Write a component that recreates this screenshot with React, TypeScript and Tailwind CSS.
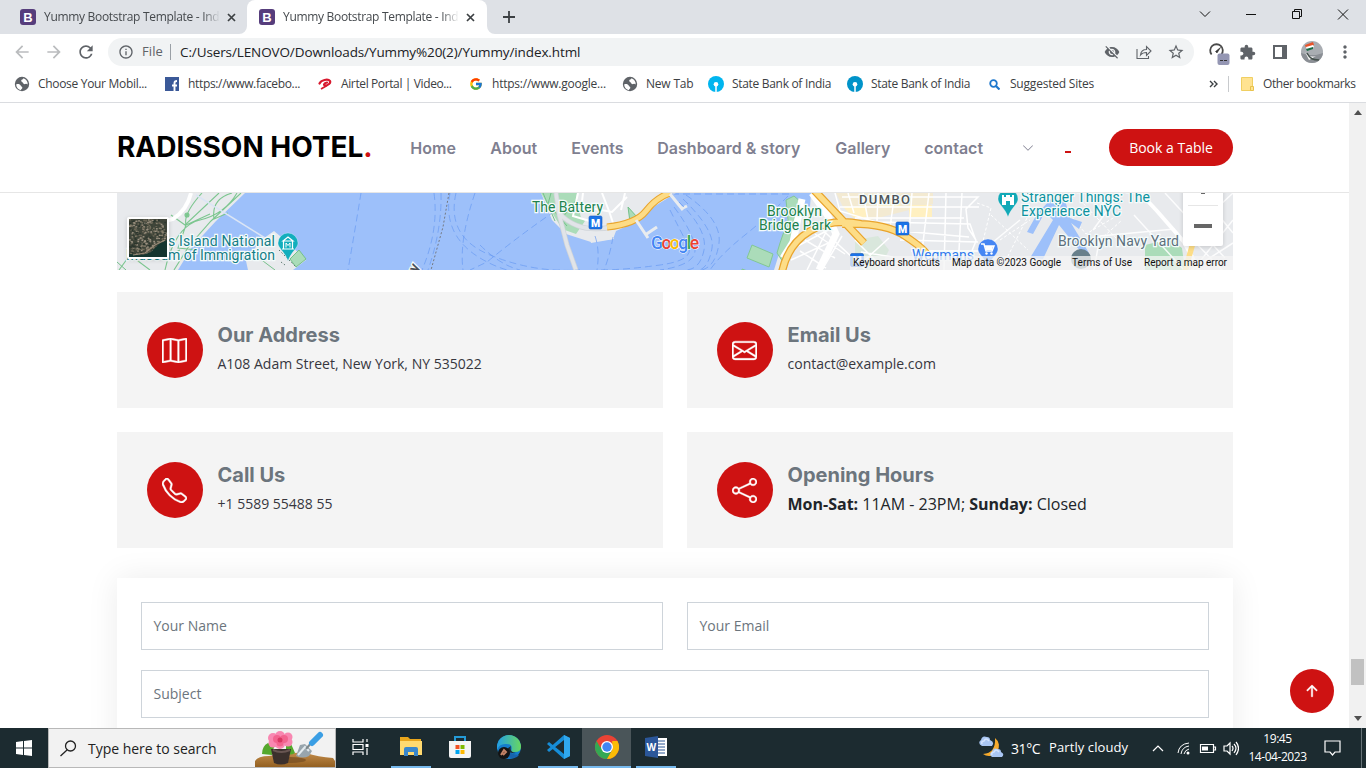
import React from "react";
import {
  BsMap,
  BsEnvelope,
  BsTelephone,
  BsShare,
  BsChevronDown,
  BsArrowUpShort,
} from "react-icons/bs";
import {
  MdRefresh,
  MdVisibilityOff,
  MdStarBorder,
  MdExtension,
  MdMoreVert,
  MdInfoOutline,
  MdArrowBack,
  MdArrowForward,
} from "react-icons/md";
import { FcGoogle } from "react-icons/fc";

const ui = "font-['Open_Sans','Noto_Sans',sans-serif]";

function TabLabel() {
  return (
    <span className="w-[176px] overflow-hidden whitespace-nowrap text-[12px] leading-4 tracking-[-0.31px] text-[#45494d] [mask-image:linear-gradient(to_right,black_90%,transparent)]">
      Yummy Bootstrap Template - Index
    </span>
  );
}

function BootstrapMark() {
  return (
    <span className="mr-2 flex size-4 items-center justify-center rounded-[3px] bg-[#563d7c] font-['Liberation_Sans',sans-serif] text-[13px] font-bold leading-none text-white">
      B
    </span>
  );
}

function Cross() {
  return (
    <svg width="9" height="9" viewBox="0 0 9 9" stroke="#3c4043" strokeWidth="1.7">
      <path d="M1 1l7 7M8 1l-7 7" />
    </svg>
  );
}

function TabStrip() {
  return (
    <div className="flex h-[34px] shrink-0 bg-[#dee1e6]">
      <div className="flex h-full w-[247px] items-center pl-5">
        <BootstrapMark />
        <TabLabel />
        <span className="ml-[7px]"><Cross /></span>
      </div>
      <div className="relative flex h-full w-[240px] items-center rounded-t-lg bg-white pl-3">
        <svg className="absolute -left-2 bottom-0" width="8" height="8"><path d="M8 0v8H0a8 8 0 0 0 8-8" fill="#fff" /></svg>
        <svg className="absolute -right-2 bottom-0" width="8" height="8"><path d="M0 0v8h8a8 8 0 0 1-8-8" fill="#fff" /></svg>
        <BootstrapMark />
        <TabLabel />
        <span className="ml-[7px]"><Cross /></span>
      </div>
      <div className="flex w-[44px] items-center justify-center">
        <svg width="12" height="12" stroke="#3c4043" strokeWidth="1.8"><path d="M6 0v12M0 6h12" /></svg>
      </div>
      <div className="flex-1" />
      <svg className="mt-[6px]" width="184" height="16" fill="none" stroke="#111" strokeWidth="1">
        <path d="M18 5.500l5 5 5-5M64 8.500h10M110.500 5.500h7v7h-7zM112.500 5.500v-2h7v7h-2M156 3.500l10 10M166 3.500l-10 10" />
      </svg>
    </div>
  );
}

function Toolbar() {
  return (
    <div className="flex h-9 shrink-0 items-center bg-white pl-3">
      <MdArrowBack className="size-5 text-[#babcbe]" />
      <MdArrowForward className="ml-3 size-5 text-[#babcbe]" />
      <MdRefresh className="ml-3 size-5 text-[#5f6368]" />
      <div className="ml-3 flex h-7 w-[1086px] items-center rounded-full bg-[#f1f3f4] pl-2.5">
        <MdInfoOutline className="size-4 text-[#5f6368]" />
        <span className="ml-2 w-[28px] text-[13px] tracking-[0.1px] text-[#5f6368]">File</span>
        <span className="h-4 w-px bg-[#9aa0a6]" />
        <span className="ml-[9px] flex-1 whitespace-nowrap text-[13.500px] tracking-[-0.11px] text-[#202124]">
          C:/Users/LENOVO/Downloads/Yummy%20(2)/Yummy/index.html
        </span>
        <MdVisibilityOff className="size-4 text-[#5f6368]" />
        <svg className="ml-4" width="16" height="16" fill="none" stroke="#5f6368" strokeWidth="1.100">
          <path d="M1 5v9.500h11.500V12M4.500 11c.5-4 3-5.500 6-5.500V2.500L15 7l-4.500 4.500v-3C8 8.500 6 9 4.500 11z" />
        </svg>
        <MdStarBorder className="ml-[15px] mr-[9px] size-[18px] text-[#5f6368]" />
      </div>
      <svg className="ml-[14px]" width="22" height="26" viewBox="0 0 22 26">
        <path d="M3.600 15.500A6.300 6.300 0 1 1 13.400 15.500" fill="none" stroke="#4a4a4a" strokeWidth="1.800" />
        <path d="M7.500 12.500l5-4-3.500 5.500z" fill="#333" stroke="#333" strokeWidth=".6" />
        <rect x="9.500" y="14.500" width="12" height="11.500" rx="2" fill="#9496b3" />
        <path d="M12 21.500h3M16 21.500h3" stroke="#333" />
      </svg>
      <MdExtension className="ml-[9px] size-[17px] text-[#5f6368]" />
      <svg className="ml-[17px]" width="14" height="14"><path d="M1 1h12v12H1z" fill="none" stroke="#5f6368" strokeWidth="2" /><path d="M9 1h5v12H9z" fill="#5f6368" /></svg>
      <svg className="ml-[14px]" width="22" height="22" viewBox="0 0 22 22">
        <defs><clipPath id="avatar"><circle cx="11" cy="11" r="11" /></clipPath></defs>
        <g clipPath="url(#avatar)">
          <path d="M0 0h22v22H0z" fill="#a9adb2" />
          <path d="M0 12l7 2 8 0 7-2v10H0z" fill="#8b8f95" />
          <path d="M4 4l8-3 1 3-8 3z" fill="#e9532a" /><path d="M5 6l7-2 1 2-7 3z" fill="#fff" /><path d="M5 8l7-2v2l-6 2z" fill="#176b45" />
          <path d="M4 11c3 5 7 5 11 4l-7 4z" fill="#f3f3f3" /><path d="M6 12c3 6 6 7 12 7" stroke="#45514c" strokeWidth="1.500" fill="none" />
        </g>
      </svg>
      <MdMoreVert className="ml-3 size-5 text-[#5f6368]" />
    </div>
  );
}

function Bookmark({ icon, label, box, text }: { icon: React.ReactNode; label: string; box: string; text: string }) {
  return (
    <div className={`flex items-center ${box}`}>
      <span className="flex size-4 items-center justify-center">{icon}</span>
      <span className={`whitespace-nowrap text-[12px] text-[#3c4043] ${text}`}>{label}</span>
    </div>
  );
}

const Globe = () => (
  <svg width="16" height="16" viewBox="0 0 16 16">
    <circle cx="8" cy="8" r="7.200" fill="#5f6368" />
    <path d="M2.300 8.300c2-.5 4 0 4.500 1.400.4 1 1.700.6 1.500 2.300 0 1-1.300 1-1.500 2.200C4 13.500 2 11 2.300 8.300z" fill="#fff" />
    <path d="M9.500 2.200c-.3 1.300-2 1-2.300 2.200-.3 1.400 1.300 1.200 1.700 2.400.3 1 1.500 1.700 2.600 1.200.8-.4 1.500.2 2.200.6.300-3-1.500-5.500-4.200-6.400z" fill="#fff" />
  </svg>
);

function SbiMark({ color }: { color: string }) {
  return (
    <svg width="16" height="16" viewBox="0 0 16 16">
      <circle cx="8" cy="8" r="8" fill={color} />
      <circle cx="8" cy="8.300" r="2.300" fill="#fff" />
      <path d="M8 8v8" stroke="#fff" strokeWidth="1.500" />
    </svg>
  );
}

function Bookmarks() {
  return (
    <div className="flex h-[33px] shrink-0 items-center border-b border-[#dadce0] bg-white pb-1 pl-[14px]">
      <Bookmark icon={<Globe />} label="Choose Your Mobil..." box="w-[150px]" text="ml-2 tracking-[-0.31px]" />
      <Bookmark icon={<svg width="14" height="14"><path d="M0 0h14v14H0z" fill="#3b5998" /><path d="M9.500 14V8.500h2.500M7 8.500h2.500V6q0-2 2.500-2" fill="none" stroke="#fff" strokeWidth="1.900" /></svg>} label="https://www.facebo..." box="w-[153px]" text="ml-2 tracking-[-0.34px]" />
      <Bookmark icon={<svg width="14" height="12"><path d="M1.500 5.500C3 2 10 .5 12 3c1 2-2 4.500-4.500 4.500S6 5 9 4.500" fill="none" stroke="#d8192e" strokeWidth="2.200" strokeLinecap="round" /><path d="M3 11l6-3.500" stroke="#d8192e" strokeWidth="1.800" /></svg>} label="Airtel Portal | Video..." box="w-[151px]" text="ml-2 tracking-[-0.38px]" />
      <Bookmark icon={<FcGoogle className="size-[14px]" />} label="https://www.google..." box="w-[154px]" text="ml-2 tracking-[-0.23px]" />
      <Bookmark icon={<Globe />} label="New Tab" box="w-[86px]" text="ml-2 tracking-[-0.2px]" />
      <Bookmark icon={<SbiMark color="#00b5ef" />} label="State Bank of India" box="w-[139px]" text="ml-2 tracking-[-0.31px]" />
      <Bookmark icon={<SbiMark color="#0093c9" />} label="State Bank of India" box="w-[139px]" text="ml-2 tracking-[-0.31px]" />
      <Bookmark icon={<svg width="11" height="11" fill="none" stroke="#1e78cd" strokeWidth="1.800"><circle cx="4.500" cy="4.500" r="3.300" /><path d="M7 7l3.500 3.500" strokeWidth="2.200" /></svg>} label="Suggested Sites" box="w-[223px]" text="ml-2 tracking-[-0.21px]" />
      <svg width="9" height="8" fill="none" stroke="#3c4043" strokeWidth="1.400"><path d="M1 1l3 3-3 3M5 1l3 3-3 3" /></svg>
      <span className="ml-[10px] h-4 w-px bg-[#c8cacd]" />
      <svg className="ml-3" width="13" height="14"><path d="M.5.500h11v13H.5z" fill="#ffe391" stroke="#f0cf62" /><path d="M9.500 9.500h3v4h-3z" fill="#ffe391" stroke="#e8c24c" /></svg>
      <span className="ml-[9px] whitespace-nowrap text-[12px] tracking-[-0.4px] text-[#3c4043]">Other bookmarks</span>
    </div>
  );
}

function SiteHeader() {
  return (
    <header className="flex h-[90px] shrink-0 items-center border-b border-[#e6e6e6] pl-[117px] pr-[116px] font-['Inter',sans-serif]">
      <h1 className="w-[293px] whitespace-nowrap pb-0.5 text-[28px] font-bold tracking-[-0.03px] text-black">
        RADISSON HOTEL<span className="text-[#ce1212]">.</span>
      </h1>
      <nav className="flex flex-1 whitespace-nowrap pl-[0.3px] text-[16px] font-semibold text-[#7f7f90]">
        <span className="w-[80px]">Home</span>
        <span className="w-[81px]">About</span>
        <span className="w-[86px]">Events</span>
        <span className="w-[178px]">Dashboard &amp; story</span>
        <span className="w-[89px]">Gallery</span>
        <span className="w-[98px]">contact</span>
        <BsChevronDown className="mt-[6px] h-3 w-3" />
        <span className="ml-[30.5px] mt-[9px] h-0.5 w-[6px] self-center bg-[#ce1212]" />
      </nav>
      <span className={`flex h-[37px] w-[124px] items-center justify-center rounded-full bg-[#ce1212] text-[14px] text-white ${ui}`}>
        Book a Table
      </span>
    </header>
  );
}

const ferryPaths = [
  "M361 193Q355 230 348 270", "M434 193Q439 230 422 270", "M441 193Q442 230 428 270", "M450 193Q442 235 480 258T560 270",
  "M456 193Q446 237 490 255T580 270", "M475 193Q459 240 463 270", "M555 211Q520 235 487 262L470 270",
  "M670 210Q680 230 688 245T660 265T600 270", "M674 207Q695 235 695 250T660 270", "M679 202Q708 230 704 250T685 270",
  "M683 199Q715 230 712 248T700 270", "M686 195Q722 220 719 243T702 270",
  "M672 194H790Q770 215 745 235T710 270", "M595 236Q600 250 597 270", "M613 237Q610 255 604 270", "M480 245Q500 265 520 270",
];

function Pin({ x, y, color, children }: { x: number; y: number; color: string; children?: React.ReactNode }) {
  return (
    <g transform={`translate(${x} ${y})`}>
      <path d="M-10 0A10 10 0 1 1 10 0C10 5 3 9 0 18C-3 9-10 5-10 0z" fill={color} stroke="#fff" strokeOpacity=".5" strokeWidth=".6" />
      {children}
    </g>
  );
}

function Metro({ x, y }: { x: number; y: number }) {
  return (
    <g transform={`translate(${x} ${y})`}>
      <rect x="-6.500" y="-6.500" width="13" height="13" rx="1.500" fill="#1a73e8" stroke="#1559bd" strokeWidth=".6" />
      <text textAnchor="middle" y="4" fontSize="10.500" fontWeight="900" fill="#fff">M</text>
    </g>
  );
}

function MapStrip() {
  const speckles = Array.from({ length: 420 }, (_, i) => {
    const a = Math.abs(Math.sin(i * 12.9898) * 43758.5453) % 1;
    const b = Math.abs(Math.sin(i * 78.233) * 24634.6345) % 1;
    return {
      x: 129 + a * 36,
      y: 219 + b * 36,
      c: ["#6b6656", "#2b352d", "#877f6c", "#3c4337", "#9a9080", "#252d29"][(i * 7 + Math.floor(i / 5)) % 6],
    };
  });
  return (
    <svg className="block h-[77px] w-[1116px] font-['Roboto',sans-serif]" viewBox="117 193 1116 77">
      <path d="M117 193h1116v77H117z" fill="#9dc0fa" />
      <path d="M117 193H245L216 221 192 247 178 270H117z" fill="#e8eaed" />
      <g fill="none" stroke="#7cc68f" strokeWidth="1.100">
        <path d="M241 193L211 221 189 246 174 270M237 193Q225 214 200 220T165 270M232 193Q211 199 214 219L228 213M202 193Q183 214 186 225L210 214M186 225L178 248 198 250M219 193L185 225 171 215M180 250Q160 260 145 250M119 270L130 255 150 270" />
        <circle cx="187" cy="215" r="2" fill="#7cc68f" />
      </g>
      <path d="M191 193Q187 210 173 219L158 223" fill="none" stroke="#fff" strokeWidth="4" />
      <path d="M196 195L265 238" stroke="#dbe5f5" strokeWidth="1.500" />
      <path d="M260 241l14-10 12 10 20 19-13 10h-45l-2-9z" fill="#e8eaed" />
      <path d="M290 259l9-9 7 9-10 8z" fill="#aadcb9" stroke="#75c08a" />
      <path d="M279 250l17 17M281 262l4 3M286 253l2 4" stroke="#5e7a72" strokeDasharray="1.500 2" />
      <path d="M117 262l9 8M255 255l20 15" stroke="#75c08a" />

      <path d="M541 193H676L655 206 636 222 616 231 613 239 591 242 566 234 552 220z" fill="#e8eaed" />
      <path d="M541 193h36l-3 18 11 10-9 13-14-5-12-20z" fill="#abdcb9" />
      <path d="M543 193l12 28M551 193l-3 11 19 22M577 199l-14 18 20 11M628 207l9 10-7 5z" stroke="#75c08a" fill="#abdcb9" />
      <path d="M578 193l-5 23 30 9M573 205l39 7 15-15M602 193l7 18 6 18M583 193l-2 17M625 193l-4 17" fill="none" stroke="#fff" strokeWidth="2" />
      <path d="M589 234l24-3 1 8-23 4z" fill="#e8eaed" />
      <path d="M556 193l3 21 8 31 10 28M560 214Q579 234 612 227" fill="none" stroke="#cfd3d8" strokeWidth="5" />
      <path d="M556 193l3 21 8 31 10 28M560 214Q579 234 612 227" fill="none" stroke="#e1e4e8" strokeWidth="3.500" />
      <path d="M607 227Q636 224 646 211T670 193" fill="none" stroke="#e8a52e" strokeWidth="7" />
      <path d="M607 227Q636 224 646 211T670 193" fill="none" stroke="#fddc86" strokeWidth="5" />
      <path d="M636 220l12 18M645 235l12-8M670 194l13 16M681 209l6-3" stroke="#e9ecef" strokeWidth="3" />
      <g fill="none" stroke="#6698f1" strokeWidth=".8" strokeOpacity=".85" strokeDasharray="7 4">
        {ferryPaths.map((d) => <path key={d} d={d} />)}
      </g>
      <path d="M449 193L443 227 431 270" fill="none" stroke="#747983" strokeDasharray="2 2" />

      <path d="M811 193H1233V270H774L779 254 786 236 788 210 795 202 810 207z" fill="#e8eaed" />
      <path d="M786 200l8-4 8 7-6 8-4 27-6 15-3 9-6-9 3-10 8-23zM752 245l21 9-4 13-22-9zM742 269l8 3h-8z" fill="#abdcb9" stroke="#82c795" />
      <path d="M812 193l16 23 8 18-17 36M802 199l-9 43-10 16" fill="none" stroke="#fff" strokeWidth="7" />
      <path d="M836 193h97v11l-63 16-27-13z" fill="#f3ead2" />
      <path d="M843 207h23v11h-12zM878 197h22v10h-22zM909 205h23v12h-23z" fill="#fff0c1" />
      <path d="M855 240l23-4 11 14-10 20h-24z" fill="#d9e7dc" />
      <path d="M1145 245l25-6 12 9 3 22h-40z" fill="#abdcb9" />
      <g fill="none" stroke="#fff" strokeWidth="1.500">
        <path d="M835 193l5 18 36 11 94 2 6 17-12 29M848 193l6 20M863 193l5 27M878 193l-1 28M895 193l-5 34M912 193l-3 41M929 193l-7 58M946 193l-2 77M962 193l-4 77M840 207h139M855 218h109M890 230l79 7M900 240l78 2M911 251h67M842 197h136l-12 12 2 19 8 12M790 250l42-22M791 260l44-20M805 240l30 18M800 251l26 17M815 234l30 20M827 230l-20 40M842 236l-20 34M816 224l50 46M855 240l30 30M889 238l-35 32M861 252l32 5" />
        <path d="M1120 193l-27 37M1134 215l50 55M1165 193l60 65M1210 205l23 28M1222 270l-34-35 45-42M1193 270l40-50M1205 193l-20 77M1233 243l-42 27M1094 270l6-34 75-7M983 270l9-27 28-23" strokeOpacity=".85" />
      </g>
      <g fill="none" stroke="#fff" strokeDasharray="3 2"><path d="M977 203l14 5-12 50M991 215l37 35M1001 270l27-54M1066 210l20 24 34-20M1080 200l36 38M1100 240l22-20M1000 240l30-20" /></g>
      <path d="M1140 193l17 18 27 31 15 28" fill="none" stroke="#fff" strokeWidth="4" />
      <path d="M1018 207l18 8 15-16 14 1 5 18 12 4-3 7-8-6 18 30-8-1-22-27-16 34-13-1 23-38-8-8-12 22-6-2 10-18z" fill="#9dc0fa" />
      <path d="M782 272Q788 244 810 231T861 224M813 189L864 243M842 224Q884 222 905 236T927 255" fill="none" stroke="#e9a42c" strokeWidth="8" />
      <path d="M782 272Q788 244 810 231T861 224M813 189L864 243M842 224Q884 222 905 236T927 255M1184 275l10-36" fill="none" stroke="#fddd87" strokeWidth="5.500" />

      <g fill="#147d86" stroke="#f4fbfb" strokeWidth="2.500" paintOrder="stroke" fontSize="14">
        <text x="149" y="246" textLength="126">Ellis Island National</text>
        <text x="126" y="260" textLength="149">Museum of Immigration</text>
        <text x="1021" y="202" textLength="129" fill="#0d929f">Stranger Things: The</text>
        <text x="1021" y="216" textLength="100" fill="#0d929f">Experience NYC</text>
        <g fill="#20824c">
          <text x="532" y="212" textLength="71">The Battery</text>
          <text x="767" y="216" textLength="55">Brooklyn</text>
          <text x="759" y="230" textLength="72">Bridge Park</text>
        </g>
        <text x="859" y="204" textLength="51" fontSize="13" fontWeight="500" fill="#4e5358">DUMBO</text>
        <text x="1058" y="246" textLength="121" fill="#5c6f7c">Brooklyn Navy Yard</text>
        <text x="912" y="260" textLength="62" fill="#3279ed">Wegmans</text>
        <text transform="translate(417 273) rotate(-65)" fontSize="15" fontWeight="500" fill="#49505b">y</text>
      </g>
      <Pin x={288} y={243} color="#12aebd"><path d="M-5-2L0-6 5-2zM-4.500-1.500v7M4.500-1.500v7M-6 6H6" fill="none" stroke="#fff" strokeWidth="1.200" /><path d="M-2 4.500V0L0 2.500 2 0v4.500" stroke="#fff" fill="none" /></Pin>
      <Pin x={1008} y={199} color="#12a9b7"><path d="M-6-4h2v2h2v-2h4v2h2v-2h2v10H2V2H-2v4h-4z" fill="#fff" /></Pin>
      <Pin x={988} y={249} color="#4686f3"><path d="M-7-5h3l2 7h6l2-5H-3" fill="none" stroke="#fff" strokeWidth="1.500" /><path d="M-3-3h8L4 1h-6z" fill="#fff" /><circle cx="-1.500" cy="4.500" r="1.200" fill="#fff" /><circle cx="3.500" cy="4.500" r="1.200" fill="#fff" /></Pin>
      <circle cx="1081" cy="259" r="10" fill="#68808b" />
      <Metro x={595.5} y={222.5} /><Metro x={902.5} y={228.5} /><Metro x={857} y={260} />
      <text x="651" y="249" textLength="48" fontSize="17.500" fontWeight="500" fill="#4285f4" stroke="#fff" strokeWidth="1" paintOrder="stroke">
        G<tspan fill="#ea4335">o</tspan><tspan fill="#fbbc05">o</tspan><tspan>g</tspan><tspan fill="#34a853">l</tspan><tspan fill="#ea4335">e</tspan>
      </text>
      <path d="M850 256h383v14H850z" fill="#f5f5f5" fillOpacity=".76" />
      <g fontSize="10" fill="#111">
        <text x="853" y="266" textLength="87">Keyboard shortcuts</text>
        <text x="952" y="266" textLength="109">Map data ©2023 Google</text>
        <text x="1072" y="266" textLength="60">Terms of Use</text>
        <text x="1144" y="266" textLength="83">Report a map error</text>
      </g>
      <rect x="127" y="217" width="42" height="42" rx="2" fill="#fff" className="drop-shadow-sm" />
      <path d="M129 219h38v38h-38z" fill="#40453a" />
      {speckles.map((s, i) => <rect key={i} x={s.x} y={s.y} width="1.800" height="1.500" fill={s.c} />)}
      <path d="M129 257v-3l14 1 8-3 8-8 8-4v17z" fill="#15352f" />
      <path d="M133 255l12-2 10-8 10-5" fill="none" stroke="#9a8b78" strokeWidth="1.200" />
      <rect x="1183" y="180" width="40" height="66" rx="2" fill="#fff" className="drop-shadow-sm" />
      <path d="M1188 205.500h30" stroke="#e6e6e6" />
      <path d="M1201 193h4v1h-4z" fill="#666" /><path d="M1194 224h18v4h-18z" fill="#666" />
    </svg>
  );
}

function InfoCard({ icon, title, children }: { icon: React.ReactNode; title: string; children: React.ReactNode }) {
  return (
    <div className="flex h-[116px] bg-[#f4f4f4] px-[30px] pt-[30px]">
      <span className="flex size-14 items-center justify-center rounded-full bg-[#ce1212] pr-px text-white">{icon}</span>
      <div className="ml-[14.5px]">
        <h3 className="pt-px font-['Inter',sans-serif] text-[20px] font-bold leading-6 text-[#6c757d]">{title}</h3>
        {children}
      </div>
    </div>
  );
}

const small = "mt-[6px] text-[14px] leading-[21px] text-[#37373f]";
const cardIcon = "size-[25px] stroke-current [stroke-width:0.25px]";

function Field({ label }: { label: string }) {
  return <div className="flex h-12 items-center border border-[#ced4da] bg-white px-[11.500px] pb-0.5 text-[14px] text-[#6c757d]">{label}</div>;
}

function Page() {
  return (
    <main className="min-w-0 flex-1 overflow-hidden bg-white">
      <SiteHeader />
      <div className={`ml-[117px] w-[1116px] ${ui}`}>
        <MapStrip />
        <div className="mt-[22px] grid grid-cols-2 gap-6">
          <InfoCard icon={<BsMap className={cardIcon} />} title="Our Address"><p className={small}>A108 Adam Street, New York, NY 535022</p></InfoCard>
          <InfoCard icon={<BsEnvelope className={cardIcon} />} title="Email Us"><p className={small}>contact@example.com</p></InfoCard>
          <InfoCard icon={<BsTelephone className={cardIcon} />} title="Call Us"><p className={small}>+1 5589 55488 55</p></InfoCard>
          <InfoCard icon={<BsShare className={cardIcon} />} title="Opening Hours">
            <p className="mt-[5px] whitespace-nowrap text-[16px] leading-6 text-[#212529]"><b className="font-bold">Mon-Sat:</b> 11AM - 23PM; <b className="font-bold">Sunday:</b> Closed</p>
          </InfoCard>
        </div>
        <div className="mt-[30px] h-[300px] bg-white p-6 shadow-[0_0_30px_rgba(0,0,0,0.08)]">
          <div className="grid grid-cols-2 gap-6"><Field label="Your Name" /><Field label="Your Email" /></div>
          <div className="mt-5"><Field label="Subject" /></div>
        </div>
      </div>
    </main>
  );
}

function Scrollbar() {
  return (
    <div className="flex w-[17px] flex-col items-center bg-[#f1f1f1]">
      <svg className="mt-[7px]" width="8" height="5"><path d="M0 5l4-5 4 5z" fill="#505050" /></svg>
      <div className="mt-[544px] h-[26px] w-[13px] bg-[#c1c1c1]" />
      <svg className="mt-[31px]" width="8" height="5"><path d="M0 0l4 5 4-5z" fill="#505050" /></svg>
    </div>
  );
}

function TaskItem({ children, open, active }: { children: React.ReactNode; open?: boolean; active?: boolean }) {
  return (
    <div className={`flex h-10 w-[49px] flex-col items-center ${active ? "bg-[#4a5559]" : ""}`}>
      <div className="flex flex-1 items-center justify-center">{children}</div>
      <span className={`h-0.5 ${active ? "w-full" : "w-10"} ${open ? "bg-[#76b9ed]" : ""}`} />
    </div>
  );
}

function Taskbar() {
  return (
    <footer className={`flex h-10 shrink-0 bg-[#1c2b30] text-white ${ui}`}>
      <div className="flex w-12 items-center justify-center">
        <svg width="16" height="16" fill="#fff"><path d="M0 2l7-1v6.500H0zM8 .900L16 0v7.500H8zM0 8.500h7V15l-7-1zM8 8.500h8V16l-8-1z" /></svg>
      </div>
      <div className="flex w-[288px] items-center border border-[#b8b8b8] bg-[#f2f2f2] pl-[11px] text-[#222]">
        <svg width="17" height="17" fill="none" stroke="#222" strokeWidth="1.300"><circle cx="10.500" cy="6" r="5" /><path d="M7 10L.5 16" /></svg>
        <span className="ml-[11px] w-[167px] whitespace-nowrap text-[14px] tracking-[-0.02px]">Type here to search</span>
        <svg width="80" height="38" viewBox="0 0 80 38">
          <defs><linearGradient id="soil" x2="0" y2="1"><stop stopColor="#c28b49" /><stop offset="1" stopColor="#936021" /></linearGradient></defs>
          <path d="M0 38v-6q3-5 14-5 20-4 37-3 12 4 27 5l2 3v6z" fill="url(#soil)" />
          <ellipse cx="35" cy="31" rx="16" ry="3" fill="#6d461e" opacity=".6" />
          <path d="M7 25q0-8 6-11l6 4-2 8zM31 17q3-3 5-2 2 4 4 9-5 3-9 0z" fill="#55a82d" />
          <path d="M16 20h20l-3 14q-7 3-14 0z" fill="#3b302c" /><path d="M18 21q8 4 17 0" stroke="#695652" strokeWidth="2" fill="none" />
          <g fill="#f887b1"><circle cx="18" cy="9" r="5" /><circle cx="25" cy="7" r="5" /><circle cx="33" cy="8" r="4.500" /><circle cx="33" cy="13" r="4.500" /><circle cx="25" cy="15" r="5" /><circle cx="18" cy="14" r="4.500" /></g>
          <g fill="#f2638f"><circle cx="22" cy="10" r="4" /><circle cx="29" cy="10" r="4" /><circle cx="25" cy="14" r="3.500" /></g>
          <circle cx="25" cy="11" r="2.500" fill="#d93763" />
          <path d="M41 27l4-11 5-1 7 7-3 5q-6 3-13 0z" fill="#98a5ad" /><path d="M43 26l7-8 4 4" stroke="#e2eaee" strokeWidth="2" fill="none" />
          <path d="M51 20l6-7" stroke="#7c888c" strokeWidth="2" /><path d="M57 14l8-8" stroke="#3a9ee4" strokeWidth="6" strokeLinecap="round" />
        </svg>
      </div>
      <TaskItem><svg width="18" height="16" fill="none" stroke="#fff" strokeWidth="1.200"><path d="M1 0v3h10V0M1 5.500h10v5H1zM1 16v-3h10v3M15 0v3M15 9v7" /><path d="M13.500 5h3v3h-3z" fill="#fff" stroke="none" /></svg></TaskItem>
      <div className="w-px" />
      <TaskItem open><svg width="22" height="20"><path d="M0 0h8l2 2h11v15H0z" fill="#e9a61c" /><path d="M0 4h22v14H0z" fill="#ffda70" /><path d="M4 19v-7q0-2 2-2h10q2 0 2 2v7h-4v-4H8v4z" fill="#3987cc" /></svg></TaskItem>
      <TaskItem><svg width="24" height="24"><path d="M7 6V2h10v4" fill="none" stroke="#249bd7" strokeWidth="2" /><path d="M1 6h22v15q0 2-2 2H3q-2 0-2-2z" fill="#f4f4f4" /><path d="M7.500 10h4v4h-4z" fill="#f25022" /><path d="M12.500 10h4v4h-4z" fill="#7fba00" /><path d="M7.500 15h4v4h-4z" fill="#00a4ef" /><path d="M12.500 15h4v4h-4z" fill="#ffb900" /></svg></TaskItem>
      <TaskItem>
        <svg width="24" height="24"><defs><linearGradient id="edge"><stop stopColor="#229ee5" /><stop offset="1" stopColor="#68d760" /></linearGradient></defs><circle cx="12" cy="12" r="12" fill="#147dcc" /><path d="M0 12A12 12 0 0 1 24 12q0 5-6 5h-4q3-9-6-8-6 0-8 6z" fill="url(#edge)" /><path d="M13 12q-2 8 9 8l-2 2Q10 26 8 14z" fill="#1763ad" /><path d="M14 11q-2 6 5 7-7 1-9-4z" fill="#1c2b30" /><circle cx="7" cy="18" r="6" fill="#131313" /><path d="M4 20l3-5 2 2-3 3" fill="none" stroke="#c28266" strokeWidth="2" /></svg>
      </TaskItem>
      <TaskItem open><svg width="24" height="24"><path d="M18 0l6 3v18l-6 3L1 9l2-2 15 12V5L3 17l-2-2z" fill="#168dd7" /><path d="M18 0l6 3v18l-6 3z" fill="#30a8ee" /></svg></TaskItem>
      <TaskItem open active>
        <svg width="24" height="24" viewBox="0 0 24 24"><circle cx="12" cy="12" r="12" fill="#ea4335" /><path d="M1.600 6A12 12 0 0 0 12 24l5.200-9L12 12H5z" fill="#34a853" /><path d="M22.400 6A12 12 0 0 1 12 24l5.200-9V6z" fill="#fbbc05" /><circle cx="12" cy="12" r="6" fill="#fff" /><circle cx="12" cy="12" r="4.700" fill="#4285f4" /></svg>
      </TaskItem>
      <TaskItem open><svg width="22" height="22"><path d="M11 2h11v18H11z" fill="#fff" /><path d="M13 5h7M13 8h7M13 11h7M13 14h7M13 17h7" stroke="#2b5797" /><path d="M0 2l13-2v22L0 20z" fill="#2b579a" /><text x="1.500" y="15" fontSize="10" fontWeight="700" fill="#fff">W</text></svg></TaskItem>
      <div className="flex-1" />
      <div className="flex items-center">
        <svg width="25" height="24"><path d="M16 2a10 10 0 1 1-12 16Q17 17 16 2z" fill="#f6aa2d" /><path d="M3 10q-5-3-1-6 1-5 6-3 3 0 3 3 5 2 2 6zM13 21q-4-3 0-5 1-5 6-3 3 0 3 3 4 2 1 5z" fill="#a9c6f3" /><path d="M3 8q-1-3 2-3 2-4 5 0M13 19q-1-3 2-3 2-4 5 0" fill="none" stroke="#d5e5ff" strokeWidth="1.500" /></svg>
        <span className="ml-[7px] w-[38px] text-[14px] tracking-[-0.4px]">31°C</span>
        <span className="w-[103px] whitespace-nowrap text-[13px] tracking-[0.1px]">Partly cloudy</span>
        <svg width="87" height="16" fill="none" stroke="#fff" strokeWidth="1.200">
          <path d="M1 11l5-5 5 5M48.500 4.500h13v8h-13zM62 7h1.500v3H62M72 6h3l3-3v11l-3-3h-3zM80 6q2 2 0 5M82 4q4 4 0 9M84 2q5 6 0 13" />
          <path d="M50 6.500h6v4h-6z" fill="#fff" stroke="none" />
          <path d="M26 13Q27 4 37 3M29 14Q30 7 37 6M32 14Q33 10 37 9" strokeWidth="1" /><circle cx="36" cy="13" r="1.500" fill="#fff" stroke="none" />
        </svg>
        <div className="ml-[9px] w-[59px] whitespace-nowrap text-center text-[12px] leading-[18px] tracking-[-0.45px]">19:45<br />14-04-2023</div>
        <svg className="ml-[17px]" width="17" height="16" fill="none" stroke="#fff" strokeWidth="1.200"><path d="M1 1h15v11h-5l-2.500 3L6 12H1z" /></svg>
        <div className="ml-5 mr-1 h-10 w-px bg-[#667277]" />
      </div>
    </footer>
  );
}

export default function App() {
  return (
    <div className={`relative flex h-[768px] w-[1366px] flex-col overflow-hidden bg-white ${ui}`}>
      <TabStrip />
      <Toolbar />
      <Bookmarks />
      <div className="flex h-[625px] shrink-0"><Page /><Scrollbar /></div>
      <Taskbar />
      <span className="absolute left-[1290px] top-[669px] flex size-11 items-center justify-center rounded-full bg-[#ce1212] text-white"><BsArrowUpShort className="size-6 stroke-current [stroke-width:0.25px]" /></span>
    </div>
  );
}
